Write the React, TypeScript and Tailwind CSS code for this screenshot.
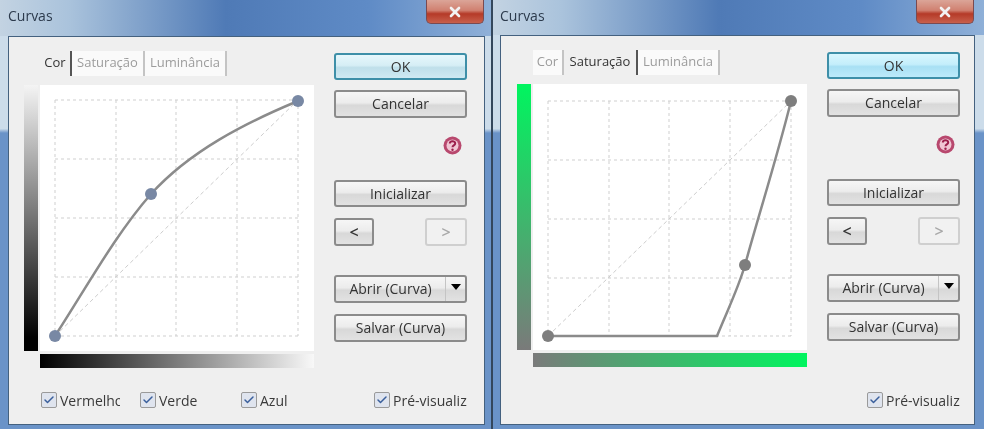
import { Check, X } from "lucide-react";
import { clsx } from "clsx";

type Props = {
  active: "Cor" | "Saturação" | "Luminância";
  tabWidths: string[];
  titleClass: string;
  padX: string;
  colClass: string;
  footClass: string;
  vBarClass: string;
  hBarClass: string;
  okClass: string;
  titleH: string;
  gridY: number[];
  curve: string;
  nodes: number[][];
  nodeClass: string;
  channels: boolean;
};

const TABS = ["Cor", "Saturação", "Luminância"] as const;
const GRID_X = [15, 76, 136, 197, 258];

function Btn({ label, className, disabled }: { label: string; className?: string; disabled?: boolean }) {
  return (
    <div
      className={clsx(
        "flex items-center justify-center rounded-[3px] border-2 text-[14px] leading-none",
        disabled
          ? "border-[#cfcfcf] bg-[#f1f1f1] text-[#a8a8a8]"
          : "border-[#8b8b8b] bg-[linear-gradient(#f6f6f6_0%,#ececec_45%,#d8d8d8_55%,#e2e2e2_100%)] text-[#333]",
        className
      )}
    >
      {label}
    </div>
  );
}

function Tick({ label, className }: { label: string; className: string }) {
  return (
    <div className={clsx("flex items-center overflow-hidden whitespace-nowrap text-[14px] text-[#3a3a3a]", className)}>
      <span className="mr-[3px] flex h-[16px] w-[16px] shrink-0 items-center justify-center rounded-[2px] border border-[#9a9a9a] bg-[#dfe4ee]">
        <Check size={12} strokeWidth={3} className="text-[#3a5f9c]" />
      </span>
      {label}
    </div>
  );
}

function HelpIcon() {
  return (
    <svg width="19" height="19" viewBox="0 0 19 19">
      <circle cx="9.5" cy="9.5" r="9" fill="#b8486e" />
      <circle cx="9.5" cy="9.5" r="6" fill="#f0c6d4" />
      <path d="M6.8 7.6c0-3.2 5.4-3.2 5.4-.2 0 2-2.7 2-2.7 3.8" fill="none" stroke="#9c1f4c" strokeWidth="2" />
      <circle cx="9.5" cy="13.8" r="1.2" fill="#9c1f4c" />
    </svg>
  );
}

function CurveDialog(p: Props) {
  return (
    <div className="flex h-full w-[491px] flex-col bg-[linear-gradient(#ccdcea_0%,#ccdcea_30%,#6a93c8_31%,#6a93c8_100%)]">
      <div className={clsx("flex justify-between", p.titleH, p.padX, p.titleClass)}>
        <span className="pt-[7px] text-[14px] leading-[18px] text-[#2c3a4c]">Curvas</span>
        <div className="mr-[1px] flex h-[24px] w-[58px] items-center justify-center rounded-b-[5px] border border-t-0 border-[#7a4a50] bg-[linear-gradient(#dba598_0%,#d08070_45%,#b53a28_60%,#c8604c_100%)]">
          <X size={16} strokeWidth={4} className="text-[#f2f2f2]" />
        </div>
      </div>

      <div className={clsx("flex min-h-0 flex-1 flex-col pb-[4px]", p.padX)}>
        <div className="flex min-h-0 flex-1 flex-col border border-[#44617f] bg-[#efefef]">
          <div className="flex flex-1">
            <div className={clsx("pt-[14px]", p.colClass)}>
              <div className="ml-[16px] flex h-[25px]">
                {TABS.map((t, i) => (
                  <div
                    key={t}
                    className={clsx(
                      "flex items-center justify-center pb-[2px] text-[13px]",
                      p.tabWidths[i],
                      t === p.active
                        ? "border-r-2 border-[#555] bg-[#efefef] text-[#333]"
                        : "border-r-2 border-[#c4c4c4] bg-[#fafafa] text-[#9c9c9c]"
                    )}
                  >
                    {t}
                  </div>
                ))}
              </div>

              <div className="mt-[9px] flex h-[266px] gap-[2px]">
                <div className={clsx("w-[14px]", p.vBarClass)} />
                <div className="h-full w-[274px] bg-white">
                  <svg width="274" height="266" viewBox="0 0 274 266">
                    {GRID_X.map((x) => (
                      <line key={x} x1={x} x2={x} y1={p.gridY[0]} y2={p.gridY[4]} stroke="#cfcfcf" strokeDasharray="3 3" />
                    ))}
                    {p.gridY.map((y) => (
                      <line key={y} x1={15} x2={258} y1={y} y2={y} stroke="#cfcfcf" strokeDasharray="3 3" />
                    ))}
                    <line x1={15} y1={p.gridY[4]} x2={258} y2={p.gridY[0]} stroke="#cdcdcd" strokeDasharray="4 3" />
                    <path d={p.curve} fill="none" stroke="#8b8b8b" strokeWidth="2.5" />
                    {p.nodes.map(([x, y]) => (
                      <circle key={x} cx={x} cy={y} r="6" className={p.nodeClass} />
                    ))}
                  </svg>
                </div>
              </div>

              <div className={clsx("ml-[16px] mt-[3px] h-[14px] w-[274px]", p.hBarClass)} />
            </div>

            <div className="w-[133px] pt-[16px]">
              <Btn label="OK" className={clsx("h-[27px]", p.okClass)} />
              <Btn label="Cancelar" className="mt-[10px] h-[28px]" />
              <div className="mt-[18px] flex h-[19px] justify-end pr-[5px]">
                <HelpIcon />
              </div>
              <Btn label="Inicializar" className="mt-[25px] h-[27px]" />
              <div className="mt-[11px] flex justify-between">
                <Btn label="<" className="h-[28px] w-[40px] text-[16px]! font-semibold" />
                <Btn label=">" className="h-[28px] w-[42px] text-[16px]! font-semibold" disabled />
              </div>
              <div className="mt-[29px] flex h-[28px] rounded-[3px] border-2 border-[#8b8b8b] bg-[linear-gradient(#f6f6f6_0%,#ececec_45%,#d8d8d8_55%,#e2e2e2_100%)] text-[14px] text-[#333]">
                <div className="flex flex-1 items-center justify-center border-r border-[#c4c4c4] leading-none">Abrir (Curva)</div>
                <div className="flex w-[19px] items-start justify-center pt-[7px]">
                  <div className="h-0 w-0 border-x-[5px] border-t-[6px] border-x-transparent border-t-black" />
                </div>
              </div>
              <Btn label="Salvar (Curva)" className="mt-[11px] h-[28px]" />
            </div>
          </div>

          <div className={clsx("flex h-[50px] pl-[32px] pt-[18px]", p.footClass)}>
            {p.channels && (
              <>
                <Tick label="Vermelho" className="h-[16px] w-[79px]" />
                <Tick label="Verde" className="ml-[20px] h-[16px] w-[81px]" />
                <Tick label="Azul" className="ml-[20px] h-[16px] w-[80px]" />
              </>
            )}
            <Tick label="Pré-visualizar" className="ml-auto h-[16px] w-[93px]" />
          </div>
        </div>
      </div>
    </div>
  );
}

export default function App() {
  return (
    <div className="flex h-[429px] w-[984px] justify-between overflow-hidden bg-[#34475c] font-['Open_Sans','Noto_Sans',sans-serif] blur-[0.4px]">
      <CurveDialog
        active="Cor"
        tabWidths={["w-[32px]", "w-[73px]", "w-[82px]"]}
        titleClass="bg-[linear-gradient(90deg,#c3d3e2_0%,#aac3dc_14%,#4f7ab6_46%,#5f8bc6_75%,#8fb0d8_100%)]"
        padX="pl-[8px] pr-[6px]"
        colClass="w-[325px] pl-[15px]"
        footClass="pr-[17px]"
        vBarClass="bg-[linear-gradient(#f4f4f4,#000000_95%)]"
        hBarClass="bg-[linear-gradient(90deg,#000000,#f8f8f8)]"
        okClass="border-[#3e8fa8]! bg-[linear-gradient(#e6f7fc_0%,#d6eef5_45%,#bfdfea_55%,#cfe9f2_100%)]!"
        titleH="h-[36px]"
        gridY={[15, 74, 133, 192, 251]}
        curve="M15 251C45 205 75 150 111 109C150 66 205 38 258 16"
        nodes={[[15, 251], [111, 109], [258, 16]]}
        nodeClass="fill-[#7888a4]"
        channels
      />
      <CurveDialog
        active="Saturação"
        tabWidths={["w-[31px]", "w-[74px]", "w-[82px]"]}
        titleClass="bg-[linear-gradient(90deg,#c3d3e2_0%,#aac3dc_14%,#4f7ab6_46%,#5f8bc6_75%,#8fb0d8_100%)]"
        padX="pl-[7px] pr-[9px]"
        colClass="w-[326px] pl-[16px]"
        footClass="pr-[14px]"
        vBarClass="bg-[linear-gradient(#00f55f,#7a7a7a)]"
        hBarClass="bg-[linear-gradient(90deg,#7a7a7a,#00f55f)]"
        okClass="border-[#3e8fa8]! bg-[linear-gradient(#d8f6fe_0%,#c4eefb_45%,#a8e0f4_55%,#bdeafa_100%)]!"
        titleH="h-[35px]"
        gridY={[17, 76, 135, 194, 252]}
        curve="M15 252H184C195 225 205 205 212 181C226 130 245 70 258 17"
        nodes={[[15, 252], [212, 181], [258, 17]]}
        nodeClass="fill-[#7e7e7e]"
        channels={false}
      />
    </div>
  );
}
